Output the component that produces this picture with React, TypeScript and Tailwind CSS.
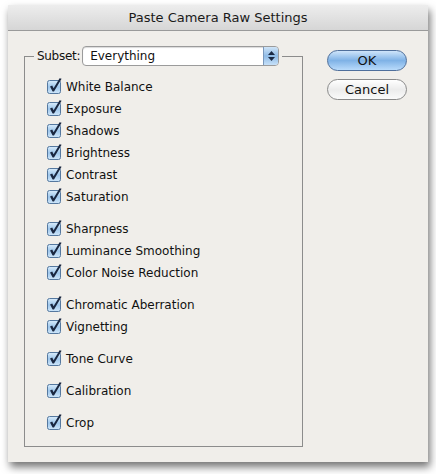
import React from "react";

const GROUPS: string[][] = [
  ["White Balance", "Exposure", "Shadows", "Brightness", "Contrast", "Saturation"],
  ["Sharpness", "Luminance Smoothing", "Color Noise Reduction"],
  ["Chromatic Aberration", "Vignetting"],
  ["Tone Curve"],
  ["Calibration"],
  ["Crop"],
];

const font = { fontFamily: '"DejaVu Sans", "Lucida Grande", sans-serif' };

function AquaCheck() {
  return (
    <svg width="17" height="17" viewBox="0 0 17 17" className="shrink-0">
      <defs>
        <linearGradient id="cb" x1="0" y1="0" x2="0" y2="1">
          <stop offset="0" stopColor="#d9ecfb" />
          <stop offset="0.5" stopColor="#9fc7ec" />
          <stop offset="1" stopColor="#cfe6fa" />
        </linearGradient>
      </defs>
      <rect x="0.5" y="3.5" width="13" height="13" rx="2" fill="url(#cb)" stroke="#55789f" />
      <path
        d="M3 9.5 L5.2 8.6 L6.6 11.2 L12.6 1.2 L14.6 1.8 L7 14.6 L5.6 14.6 Z"
        fill="#1a2740"
      />
    </svg>
  );
}

function Row({ label }: { label: string }) {
  return (
    <div className="flex items-center h-[22px]">
      <div className="mt-[-3px]">
        <AquaCheck />
      </div>
      <span className="ml-[2px] text-[12px] text-[#111]">{label}</span>
    </div>
  );
}

export default function App() {
  return (
    <div className="w-[436px] h-[474px] bg-white pt-[5px] pl-[8px]" style={font}>
      <div className="w-[420px] h-[457px] flex flex-col bg-[#f0eeea] shadow-[2px_5px_8px_rgba(0,0,0,0.55)]">
        <div className="h-[26px] shrink-0 flex items-center justify-center bg-gradient-to-b from-[#ededed] to-[#d6d6d6] border-b border-[#9a9a9a]">
          <span className="text-[13px] text-[#1a1a1a]">Paste Camera Raw Settings</span>
        </div>
        <div className="flex pl-[16px] pt-[15px]">
          <fieldset className="w-[279px] min-w-0 h-[401px] border border-[#8c8c8c]">
            <legend className="ml-[9px] px-[3px] flex items-center h-[20px]">
              <span className="text-[12px] text-[#111] mr-[2px] tracking-[-0.3px]">Subset:</span>
              <div className="w-[197px] h-[20px] flex items-stretch rounded-[4px] border border-[#9b9b9b] bg-white overflow-hidden shadow-[inset_0_1px_1px_rgba(0,0,0,0.15)]">
                <span className="flex-1 text-[12px] text-[#111] pl-[7px] leading-[18px]">Everything</span>
                <div className="w-[15px] flex flex-col items-center justify-center gap-[2px] bg-gradient-to-b from-[#cfe4f7] via-[#8fbbe6] to-[#c6e0f8] border-l border-[#7a98bc]">
                  <svg width="7" height="4" viewBox="0 0 7 4">
                    <path d="M0 4 L3.5 0 L7 4 Z" fill="#1b2a44" />
                  </svg>
                  <svg width="7" height="4" viewBox="0 0 7 4">
                    <path d="M0 0 L3.5 4 L7 0 Z" fill="#1b2a44" />
                  </svg>
                </div>
              </div>
            </legend>
            <div className="flex flex-col gap-[10px] pt-[10px] pl-[22px]">
              {GROUPS.map((g, i) => (
                <div key={i} className="flex flex-col">
                  {g.map((l) => (
                    <Row key={l} label={l} />
                  ))}
                </div>
              ))}
            </div>
          </fieldset>
          <div className="flex flex-col gap-[8px] ml-[24px] mt-[4px]">
            <button className="w-[80px] h-[21px] rounded-full border border-[#4f6f9b] bg-gradient-to-b from-[#cfe5fa] via-[#7fb2e6] to-[#b9dbfb] text-[13px] text-[#111] leading-[19px]">
              OK
            </button>
            <button className="w-[80px] h-[21px] rounded-full border border-[#8a8a8a] bg-gradient-to-b from-[#ffffff] via-[#ececec] to-[#fafafa] text-[13px] text-[#111] leading-[19px]">
              Cancel
            </button>
          </div>
        </div>
      </div>
    </div>
  );
}
